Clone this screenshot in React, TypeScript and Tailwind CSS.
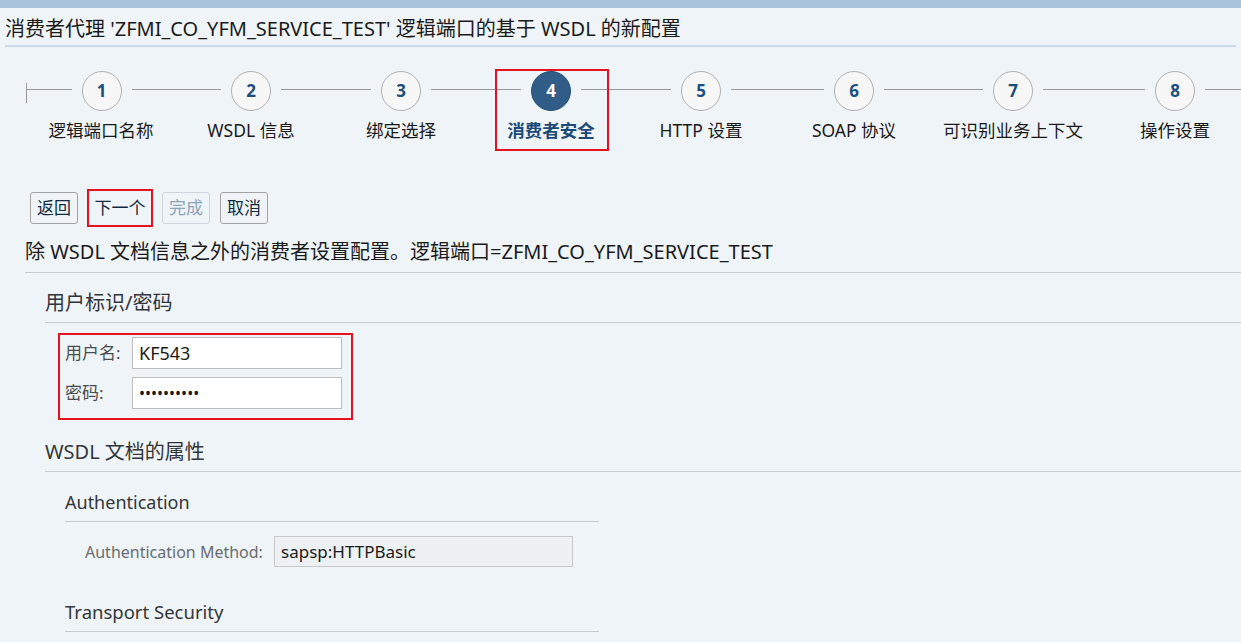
import React from "react";

const steps = [
  { n: "1", label: "逻辑端口名称", w: "w-[150px]" },
  { n: "2", label: "WSDL 信息", w: "w-[150px]" },
  { n: "3", label: "绑定选择", w: "w-[150px]" },
  { n: "4", label: "消费者安全", w: "w-[150px]", active: true },
  { n: "5", label: "HTTP 设置", w: "w-[150px]" },
  { n: "6", label: "SOAP 协议", w: "w-[156px]" },
  { n: "7", label: "可识别业务上下文", w: "w-[162px]" },
  { n: "8", label: "操作设置", w: "w-[162px]" },
];

const font = "font-['Noto_Sans','Noto_Sans_CJK_SC',sans-serif]";

function Heading({ children, className = "" }: { children: React.ReactNode; className?: string }) {
  return (
    <div className={`flex items-end border-b border-[#c8cbce] pb-[6px] leading-[26px] text-[#32363a] ${className}`}>
      {children}
    </div>
  );
}

export default function App() {
  return (
    <div className={`h-[642px] w-[1241px] overflow-hidden bg-[#eff4f9] ${font}`}>
      <div className="h-[8px] bg-[#a9c3dd]" />
      <div className="mx-[5px] flex h-[39px] items-center border-b-2 border-[#ccdaea] pt-[4px] text-[20px] text-[#1a1a1a]">
        消费者代理 'ZFMI_CO_YFM_SERVICE_TEST' 逻辑端口的基于 WSDL 的新配置
      </div>

      {/* roadmap */}
      <div className="ml-[26px] mt-[24px] flex">
        {steps.map((s, i) => (
          <div key={s.n} className={`relative flex shrink-0 flex-col items-center ${s.w}`}>
            <div className="flex w-full items-start">
              {i === 0 && <div className="mt-[12px] h-[20px] w-px bg-[#9a9a9a]" />}
              <div className="mt-[18px] h-px flex-1 bg-[#9a9a9a]" />
              <div
                className={`mx-[10px] flex h-[40px] w-[40px] items-center justify-center rounded-full border text-[17px] font-bold ${
                  s.active ? "border-[#25507a] bg-[#2f5d88] text-white" : "border-[#b0b0b0] bg-[#f7f7f7] text-[#1c4f80]"
                }`}
              >
                {s.n}
              </div>
              <div className="mt-[18px] h-px flex-1 bg-[#9a9a9a]" />
            </div>
            <div
              className={`mt-[7px] whitespace-nowrap text-[17.5px] leading-[24px] ${
                s.active ? "font-bold text-[#1c4a78]" : "text-[#1a1a1a]"
              }`}
            >
              {s.label}
            </div>
            {s.active && (
              <div className="absolute left-[19px] top-[-2px] h-[82px] w-[114px] border-2 border-[#e3141d]" />
            )}
          </div>
        ))}
      </div>

      {/* buttons */}
      <div className="ml-[30px] mt-[47px] flex items-center gap-[10px] text-[17px]">
        <button className="h-[32px] rounded-[3px] border border-[#a3a3a3] px-[6px] text-[#102a43]">返回</button>
        <button className="-ml-px h-[38px] w-[66px] border-2 border-[#e3141d] text-[#102a43]">下一个</button>
        <button className="-ml-px h-[32px] rounded-[3px] border border-[#cdd4dc] px-[6px] text-[#8ca3ba]">完成</button>
        <button className="h-[32px] rounded-[3px] border border-[#a3a3a3] px-[6px] text-[#102a43]">取消</button>
      </div>

      <div className="ml-[25px] mt-[12px] flex h-[34px] items-start border-b border-[#c8cbce] text-[20px] leading-[26px] text-[#1a1a1a]">
        除 WSDL 文档信息之外的消费者设置配置。逻辑端口=ZFMI_CO_YFM_SERVICE_TEST
      </div>

      <div className="ml-[45px]">
        <Heading className="h-[50px] text-[20px]">用户标识/密码</Heading>

        <div className="ml-[13px] mt-[10px] w-[295px] border-2 border-[#e3141d] pb-[9px] pl-[5px] pt-[2px]">
          <div className="flex flex-col gap-[8px]">
            {[
              ["用户名:", "KF543", "text-[18px]"],
              ["密码:", "••••••••••", "text-[16px]"],
            ].map(([l, v, t]) => (
              <div key={l} className="flex items-center">
                <div className="w-[67px] text-[17px] text-[#4a4d50]">{l}</div>
                <div className={`flex h-[32px] w-[210px] items-center border border-[#bdbdbd] bg-white px-[6px] text-[#1a1a1a] ${t}`}>
                  {v}
                </div>
              </div>
            ))}
          </div>
        </div>

        <Heading className="h-[52px] text-[20px]">WSDL 文档的属性</Heading>

        <div className="ml-[20px] w-[534px]">
          <Heading className="h-[50px] text-[18px]">Authentication</Heading>
          <div className="mt-[14px] flex items-center pl-[20px]">
            <div className="w-[189px] text-[16px] text-[#6a6d70]">Authentication Method:</div>
            <div className="flex h-[31px] w-[299px] items-center border border-[#c8c8c8] bg-[#eef1f4] px-[6px] text-[17px] text-[#1a1a1a]">
              sapsp:HTTPBasic
            </div>
          </div>
          <Heading className="h-[65px] text-[18.5px]">Transport Security</Heading>
        </div>
      </div>
    </div>
  );
}
